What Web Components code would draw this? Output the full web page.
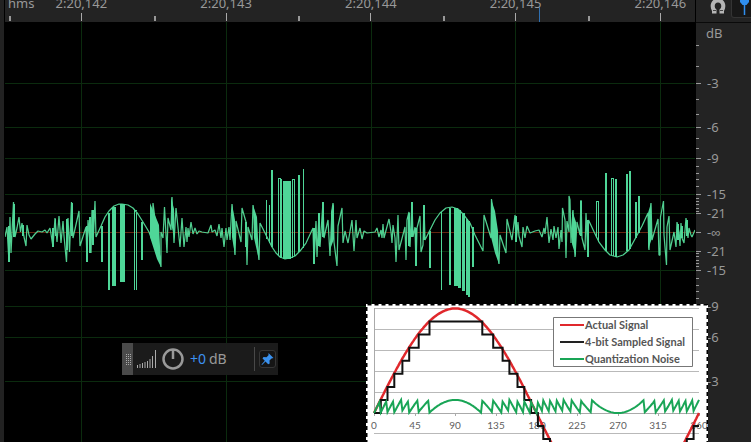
<!DOCTYPE html>
<html lang="en">
<head>
<meta charset="utf-8">
<meta name="viewport" content="width=device-width, initial-scale=1">
<title>Waveform Editor</title>
<style>
    html, body {
        height: 100%;
        margin: 0;
    }

    body {
        background: #000;
        color: #999;
        font: 13px/16px "Noto Sans", sans-serif;
        overflow: hidden;
    }
</style>
</head>
<body>
<wave-editor>
    <time-ruler slot="ruler" start="142" count="5">hms</time-ruler>
    <snap-tools slot="tools"></snap-tools>
    <wave-view slot="wave"></wave-view>
    <db-scale slot="scale"></db-scale>
    <gain-hud slot="overlay"></gain-hud>
    <noise-chart slot="overlay"></noise-chart>
</wave-editor>

<script>
// dB lines of the upper half, the lower half is mirrored round the centre
const CENTRE = 232;
const DB_LINES = [[83, '-3'], [127, '-6'], [158, '-9'], [194, '-15'], [213, '-21']];

class WaveEditor extends HTMLElement {
    constructor() {
        super();
        this.attachShadow({ mode: 'open' });
        this.shadowRoot.innerHTML = `
            <style>
                :host {
                    display: grid;
                    grid-template-columns: 4px minmax(0, 1fr) 55px;
                    grid-template-rows: 22px minmax(0, 1fr);
                    column-gap: 1px;
                    height: 100%;
                    position: relative;
                    overflow: hidden;
                }

                .gutter {
                    grid-row: 1 / 3;
                    background: #222;
                }

                ::slotted(*) {
                    min-width: 0;
                    min-height: 0;
                }
            </style>
            <div class="gutter"></div>
            <slot name="ruler"></slot>
            <slot name="tools"></slot>
            <slot name="wave"></slot>
            <slot name="scale"></slot>
            <slot name="overlay"></slot>
        `;
    }
}

class TimeRuler extends HTMLElement {
    constructor() {
        super();
        this.attachShadow({ mode: 'open' });
        const start = Number(this.getAttribute('start'));
        const count = Number(this.getAttribute('count'));
        let cells = '';
        for (let i = 0; i < count; i++) {
            cells += `<li><span>2:20,${start + i}</span></li>`;
        }
        this.shadowRoot.innerHTML = `
            <style>
                :host {
                    display: block;
                    position: relative;
                    overflow: hidden;
                    background: #232323;
                    line-height: 6px;
                }

                .unit {
                    position: absolute;
                    left: 3px;
                    top: 0;
                }

                ul {
                    display: grid;
                    grid-template-columns: repeat(${count}, 21.1%);
                    height: 100%;
                    margin: 0;
                    padding: 0 0 0 4px;
                    list-style: none;
                }

                /* major tick in the middle of a cell, minor tick on its left edge */
                li {
                    text-align: center;
                    background:
                        linear-gradient(#aaa, #aaa) 50% 13px / 1px 8px no-repeat,
                        linear-gradient(#999, #999) 0 16px / 2px 5px no-repeat;
                }

                .playhead {
                    position: absolute;
                    left: 77.4%;
                    top: 7px;
                    bottom: 0;
                    width: 1px;
                    background: #2f6fb0;
                }
            </style>
            <span class="unit"><slot></slot></span>
            <ul>${cells}</ul>
            <div class="playhead"></div>
        `;
    }
}

class SnapTools extends HTMLElement {
    constructor() {
        super();
        this.attachShadow({ mode: 'open' });
        this.shadowRoot.innerHTML = `
            <style>
                :host {
                    display: flex;
                    gap: 3px;
                    overflow: hidden;
                    padding-left: 12px;
                    background: #232323;
                }

                button {
                    flex: none;
                    box-sizing: border-box;
                    width: 20px;
                    height: 18px;
                    padding: 0;
                    border: 0;
                    background: none;
                }

                .on {
                    width: 26px;
                    border: 1px solid #343434;
                    border-top: 0;
                    border-radius: 0 0 3px 3px;
                    background: #181818;
                }

                svg {
                    display: block;
                }
            </style>
            <button aria-label="Toggle snapping">
                <svg width="20" height="18" viewBox="0 0 20 18">
                    <path d="M4 13.500V11C1 6 3 -1.500 10 -1.500S19 6 16 11V13.500H11.500V9.500C14.500 7 13.500 2.500 10 2.500S5.500 7 8.500 9.500V13.500z" fill="#b5b5b5"/>
                    <path d="M5 10.500h3M12 10.500h3" stroke="#444"/>
                </svg>
            </button>
            <button class="on" aria-label="Pin playhead">
                <svg width="24" height="18" viewBox="0 0 24 18">
                    <path d="M8 0h9v2l-2.500 3h-4L8 2z" fill="#2f8eee"/>
                    <path d="M12.500 4v11" stroke="#2f8eee" stroke-width="1.500"/>
                </svg>
            </button>
        `;
    }
}

class WaveView extends HTMLElement {
    constructor() {
        super();
        this.attachShadow({ mode: 'open' });

        const grid = DB_LINES.flatMap(([y]) => [y, 2 * CENTRE - y])
            .map((y) => `M0 ${y + 0.5}H2000`).join('');
        const columns = [81, 226, 371, 515, 660].map((x) => `M${x + 0.5} 0V1000`).join('');

        // sample peaks, x y pairs
        const line = `5 237 7 227 9 262 10 217 11 253 13.500 202 15 237 17 228 19 217 20.500 232 22 223 24 237
            26 246 27 225 29 235 31 239 35 234 38 231 42 232 45 230 47 233 50 228 51 234 53 247 55 218 57 242
            59 216 61 243 63 221 64 236 66.500 262 68 218 69.500 252 71.500 202 73 238 79 211 80 246 86 227
            87 262 88 220 91 253 92 210 93 245 95 201 96 237 101 226 105 217 109 211 114 206 119 204 122 204
            128 205 133 208 138 214 143 222 149 232 152 240 153 203 161 267 161 232 163 238 164.500 207 167 253
            168 218 171 230 172 197 174 243 176 208 180 247 182 218 184 247 186 227 187 242 188 228 189 237
            191 222 193 234 195 228 197 234 199 231 202 232 208 233 211 225 212 232 215 230 217 236 219 224
            221 238 222 228 224 247 226 228 227 240 229 227 230 240 232 204 235 255 236 221 241 242 242 208
            246 222 247 265 248 227 252 240 253 205 259 260 260 223 265 233 272 247 276 253 280 257 285 259
            290 258 295 256 300 251 306 243 313 228 314 264 316 221 317 257 319 213 320 247 323 202 324 238
            328 220 330 256 332 210 333 203 334 242 337 266 338 226 342 208 343 243 345 231 348 243 352 220
            354 251 356 220 357 238 360 228 362 239 364 231 367 233 375 232 377 228 379 237 381 230 382 238
            383 224 384 238 389 219 391 232 392 243 393 225 395 238 396 262 398 215 399 250 405 227 406 260
            407 220 409 212 410 247 412 202 413 237 415 227 416 266 417 228 420 216 421 252 423 245 424 205
            425 240 430 230 435 220 440 213 446 208 452 207 458 209 464 215 470 223 475 235 483 251 484 215
            491 238 491.500 199 499 264 500 235 506 253 507 219 512 240 515 215 516 242 518 222 519 236
            522 247 523 227 525 238 527 226 530 233 535 231 539 230 542 237 544 228 545 234 547 217 549 243
            551 229 553 240 554 226 556 238 558 227 559 249 561 230 562 242 562.500 208 565 220 566 258
            567 221 569 232 569 196 570 200 571 243 573 210 575 257 577 222 580 235 581 200 582 238 585 250
            586 213 588 257 588.500 220 596 236 599 242 605 250 610 255 617 257 623 255 629 250 635 239
            642 226 648 213 649 250 651 203 652 240 658 219 659 255 660 255 660.500 217 663.500 201 664 235
            666.500 265 667 227 669 216 670 250 674 232 676 247 677 222 679 232 680 246 681 223 682 238
            684 243 686 218 688 238 689 228 691 235 692 237 695 230`;

        // clipped samples: x, width, top, bottom
        const bars = [
            [8, 2, 226, 262], [13, 2, 204, 237], [22, 2, 225, 236], [52, 2, 228, 247], [55, 1, 219, 236],
            [66, 2, 219, 250], [71, 2, 203, 236], [86, 2, 226, 262], [89, 2, 217, 253], [92, 2, 210, 245],
            [101, 2, 226, 262], [108, 2, 213, 290], [112, 4, 207, 286],
            [120, 5, 204, 282], [134, 1, 210, 290], [136, 1, 213, 290], [141, 2, 222, 260],
            [245, 2, 222, 247],
            [266, 1, 200, 239], [269, 1, 205, 243], [271, 2, 170, 247], [278, 1, 178, 256],
            [280, 2, 179, 258], [283, 8, 181, 259], [292, 1, 180, 258], [294, 1, 179, 256],
            [298, 2, 175, 252], [303, 1, 169, 248], [313, 2, 228, 264], [318, 2, 213, 246], [322, 2, 202, 237],
            [408, 2, 213, 246], [411, 2, 202, 237], [415, 2, 228, 266], [423, 2, 205, 240],
            [429, 2, 231, 268], [441, 1, 212, 290], [449, 2, 208, 285], [454, 4, 208, 286],
            [458, 3, 210, 288], [462, 3, 213, 291], [466, 2, 219, 295], [468, 2, 221, 297], [472, 2, 227, 267],
            [515, 2, 216, 242], [580, 2, 201, 236], [587, 2, 220, 257],
            [596, 1, 201, 238], [598, 1, 202, 242], [605, 2, 173, 251], [611, 1, 178, 255],
            [613, 1, 178, 256], [615, 2, 179, 257], [626, 2, 174, 251], [629, 2, 171, 249],
            [635, 2, 202, 238], [638, 2, 196, 233], [677, 2, 224, 240], [681, 2, 226, 238], [686, 2, 220, 236]
        ].map(([x, w, top, bottom]) => `<path d="M${x} ${top}h${w}V${bottom}h-${w}z"/>`).join('');

        this.shadowRoot.innerHTML = `
            <style>
                :host {
                    display: block;
                    overflow: hidden;
                    background: #000;
                }

                svg {
                    display: block;
                    width: 100%;
                    height: 100%;
                }
            </style>
            <svg viewBox="5 22 690 420" preserveAspectRatio="xMinYMin slice" fill="none">
                <path d="${grid}${columns}" stroke="#0b2b0e"/>
                <path d="M5 232.500H695" stroke="#64240f"/>
                <polyline points="${line}" stroke="#50cf90" stroke-width="1.250" stroke-linejoin="bevel"/>
                <g fill="#4fd698">
                    ${bars}
                    <path d="M150 203l9 22 2 42-4-8-7-22zM171 197l3 12 1 30-4-15zM232 204l3 16v35l-3-18z"/>
                    <path d="M253 205l4 12 2 43-5-22zM491 199l4 12 3 20 1 33-4-11-4-16zM572 210l4 12v35l-4-13z"/>
                    <path d="M648 213l3-10 1 35-4 12zM331 212l3-9v36l-3 8z"/>
                    <path d="M134 210h3v1h-3zM278 178h3v1h-3zM292 179h3v1h-3zM596 201h3v1h-3zM611 178h3v1h-3z"/>
                </g>
            </svg>
        `;
    }
}

class DbScale extends HTMLElement {
    constructor() {
        super();
        this.attachShadow({ mode: 'open' });
        const minor = [45, 66, 99, 114, 138, 148, 166, 173, 179, 186, 198, 201, 204, 208, 211];
        const mirror = (ys) => ys.flatMap((y) => [y, 2 * CENTRE - y]);
        const ticks = mirror(minor).map((y) => `M0 ${y + 0.5}h3`).join('') +
            mirror([...DB_LINES.map(([y]) => y), CENTRE]).map((y) => `M0 ${y + 0.5}h5`).join('');
        const labels = DB_LINES.map(([y, text]) => `
            <text x="11" y="${y + 5}">${text}</text>
            <text x="11" y="${2 * CENTRE - y + 5}">${text}</text>`).join('');
        this.shadowRoot.innerHTML = `
            <style>
                :host {
                    display: block;
                    overflow: hidden;
                    border-top: 1px solid #0a0a0a;
                    background: #232323;
                }

                svg {
                    display: block;
                    width: 100%;
                    height: 100%;
                }
            </style>
            <svg viewBox="0 23 55 419" preserveAspectRatio="xMinYMin slice">
                <path d="${ticks}" stroke="#999"/>
                <g fill="#999">
                    <text x="10" y="38">dB</text>
                    ${labels}
                    <text x="11" y="${CENTRE + 5}">-∞</text>
                </g>
            </svg>
        `;
    }
}

class GainHud extends HTMLElement {
    constructor() {
        super();
        this.attachShadow({ mode: 'open' });
        this.shadowRoot.innerHTML = `
            <style>
                /* floats over the waveform */
                :host {
                    position: absolute;
                    left: 122px;
                    top: 343px;
                    display: flex;
                    align-items: center;
                    gap: 4px;
                    box-sizing: border-box;
                    width: 156px;
                    height: 32px;
                    padding-right: 2px;
                    background: rgba(29, 29, 29, .94);
                    font-size: 14px;
                }

                svg {
                    display: block;
                    flex: none;
                }

                label {
                    display: flex;
                    flex: 1;
                    gap: 2px;
                    padding-left: 1px;
                }

                input {
                    width: 17px;
                    padding: 0;
                    border: 0;
                    background: none;
                    color: #3d92f2;
                    font: inherit;
                }

                .divider {
                    width: 1px;
                    height: 24px;
                    background: #484848;
                }

                button {
                    box-sizing: border-box;
                    width: 17px;
                    height: 18px;
                    padding: 0;
                    border: 1px solid #363636;
                    border-radius: 3px;
                    background: #151515;
                }
            </style>
            <svg width="11" height="32">
                <path d="M0 0h11v32H0z" fill="#4a4a4a"/>
                <path d="M4 11.500h5M4 13.500h5M4 15.500h5M4 17.500h5M4 19.500h5M4 21.500h5" stroke="#aaa" stroke-dasharray="1 1"/>
            </svg>
            <svg width="20" height="20" stroke="#aaa">
                <path d="M.5 16v3M3 15v4M5.500 14v5M8 13v6M10.500 12v7M13 10v9M15.500 7v12M18.500 1v18"/>
            </svg>
            <svg width="24" height="24" fill="none" stroke="#999" stroke-width="2.500">
                <circle cx="12" cy="12" r="9.500"/>
                <path d="M12 3v9"/>
            </svg>
            <label><input value="+0" aria-label="Gain in dB">dB</label>
            <div class="divider"></div>
            <button aria-label="Pin HUD">
                <svg width="15" height="16" fill="#3a91ee">
                    <path d="M8.500 2l5 5-2 .5-2 2 .2 3-1.500.7-2.700-2.700L2 14l-.5-.5 3.300-3.700L2.500 7.500l1-1.500 3 .2 2-2z"/>
                </svg>
            </button>
        `;
    }
}

class NoiseChart extends HTMLElement {
    constructor() {
        super();
        this.attachShadow({ mode: 'open' });

        // sine, its 4-bit quantisation and the difference of the two
        const signal = [];
        const sampled = [];
        const noise = [];
        const toY = (v) => (109 - v * 104.5).toFixed(1);
        let last = 0;
        for (let deg = 0; deg <= 360; deg += 1.5) {
            const x = (8 + deg * 325 / 360).toFixed(1);
            const value = Math.sin(deg * Math.PI / 180);
            const level = Math.min(7, Math.floor(value * 8)) / 8;
            signal.push(`${x},${toY(value)}`);
            sampled.push(`${x},${toY(last)}`, `${x},${toY(level)}`);
            noise.push(`${x},${toY(value - level)}`);
            last = level;
        }

        let axis = '';
        let labels = '';
        for (let i = 0; i <= 8; i++) {
            const x = 8 + Math.round(i * 325 / 8);
            axis += `M${x}.5 109v3`;
            labels += `<text x="${x}" y="125">${i * 45}</text>`;
        }

        const legend = [['#e0282c', 'Actual Signal'], ['#222', '4-bit Sampled Signal'], ['#19a556', 'Quantization Noise']]
            .map(([color, name], i) => `
                <path d="M194 ${21 + i * 17}h24" stroke="${color}" stroke-width="2"/>
                <text x="219" y="${25 + i * 17}">${name}</text>`).join('');

        this.shadowRoot.innerHTML = `
            <style>
                /* pasted picture lying over the editor */
                :host {
                    position: absolute;
                    left: 366px;
                    top: 304px;
                    bottom: 0;
                    overflow: hidden;
                    background: #fff;
                    font-family: Lato, sans-serif;
                }

                svg {
                    display: block;
                }

                .axis {
                    font-size: 10px;
                    text-anchor: middle;
                }

                .legend {
                    font-size: 11px;
                    font-weight: bold;
                }
            </style>
            <svg width="342" height="138" fill="none">
                <path d="M8 4.500h325M8 25.500h325M8 46.500h325M8 67.500h325M8 88.500h325M8 129.500h325" stroke="#b9b9b9"/>
                <path d="M8.500 4v105M8 109.500h325${axis}" stroke="#aaa"/>
                <g class="axis" fill="#606060">${labels}</g>
                <polyline points="${signal.join(' ')}" stroke="#e0282c" stroke-width="2.500"/>
                <polyline points="${sampled.join(' ')}" stroke="#111" stroke-width="2"/>
                <polyline points="${noise.join(' ')}" stroke="#19a556" stroke-width="2"/>
                <path d="M187.500 13.500h139v49h-139z" fill="#fff" stroke="#777"/>
                <g class="legend" fill="#555">${legend}</g>
                <path d="M.75 140V.75H341.250V140" stroke="#000" stroke-width="1.500" stroke-dasharray="4 3"/>
            </svg>
        `;
    }
}

customElements.define('wave-editor', WaveEditor);
customElements.define('time-ruler', TimeRuler);
customElements.define('snap-tools', SnapTools);
customElements.define('wave-view', WaveView);
customElements.define('db-scale', DbScale);
customElements.define('gain-hud', GainHud);
customElements.define('noise-chart', NoiseChart);
</script>
</body>
</html>
